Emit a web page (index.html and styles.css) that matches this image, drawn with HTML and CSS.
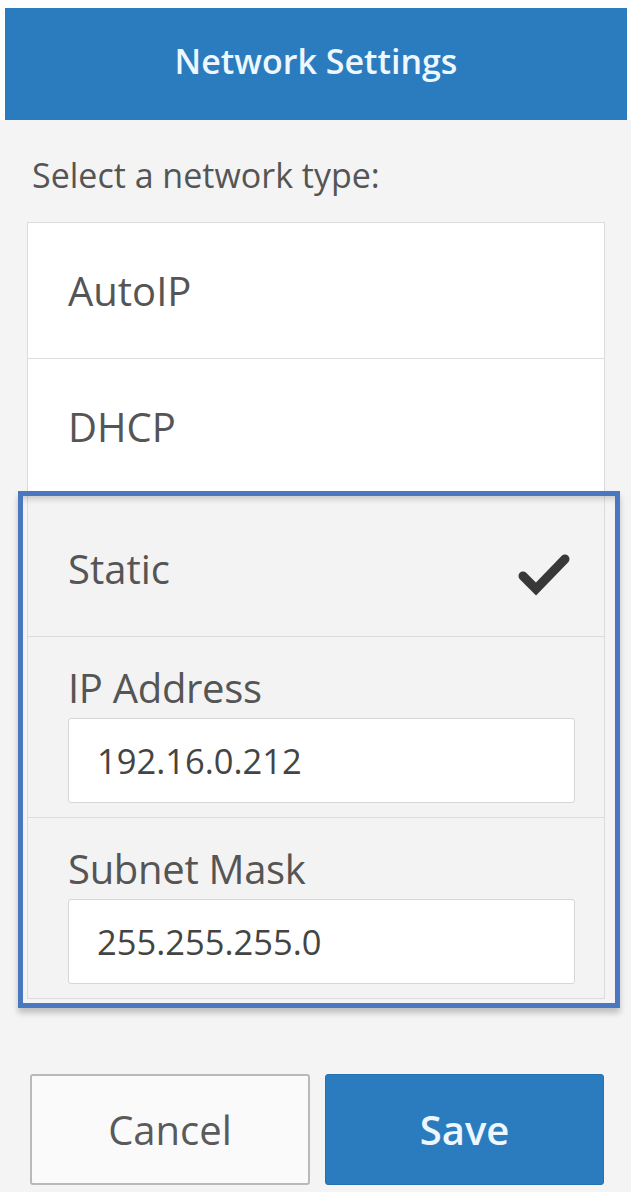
FILE: index.html
```html
<!DOCTYPE html>
<html lang="en">
<head>
<meta charset="utf-8">
<title>Network Settings</title>
<link rel="stylesheet" href="styles.css">
</head>
<body>
<div class="top">
  <header class="title-bar"><h1>Network Settings</h1></header>
</div>
<main class="panel">
  <p class="prompt">Select a network type:</p>
  <div class="options">
    <div class="option">AutoIP</div>
    <div class="option option-dhcp">DHCP</div>
    <div class="option-group">
      <div class="option option-static">
        <span>Static</span>
        <svg class="check" viewBox="0 0 52 44" aria-hidden="true"><path d="M5 24 L18 37 L47 7" /></svg>
      </div>
      <div class="field">
        <label for="ip">IP Address</label>
        <input id="ip" class="text-input" type="text" value="192.16.0.212">
      </div>
      <div class="field field-last">
        <label for="mask">Subnet Mask</label>
        <input id="mask" class="text-input" type="text" value="255.255.255.0">
      </div>
    </div>
  </div>
  <div class="actions">
    <button class="btn btn-cancel" type="button">Cancel</button>
    <button class="btn btn-save" type="button">Save</button>
  </div>
</main>
</body>
</html>
```
FILE: styles.css
```css
* { box-sizing: border-box; }
html, body { margin: 0; padding: 0; }
body {
  width: 631px;
  height: 1192px;
  overflow: hidden;
  background: #f4f4f4;
  font-family: "Open Sans", "Noto Sans", sans-serif;
  color: #555;
}
.top {
  background: #fdfdfd;
  padding: 8px 4px 0 5px;
}
.title-bar {
  height: 112px;
  background: #2b7cbf;
  display: flex;
  align-items: center;
  justify-content: center;
  padding-bottom: 6px;
}
.title-bar h1 {
  margin: 0;
  font-size: 34px;
  font-weight: 600;
  color: #eef7fd;
}
.panel {
  padding: 0 0 8px 0;
}
.prompt {
  margin: 0 0 27px 0;
  padding: 35px 0 0 32px;
  font-size: 34px;
  line-height: 40px;
  color: #555;
}
.options {
  margin: 0 26px 0 27px;
  background: #fff;
  border: 1px solid #dcdcdc;
}
.option {
  height: 136px;
  border-bottom: 1px solid #dcdcdc;
  display: flex;
  align-items: center;
  padding: 0 34px 0 40px;
  font-size: 40px;
  color: #555;
}
.option-dhcp {
  height: 134px;
  border-bottom: none;
}
.option-group {
  position: relative;
  background: #f3f3f3;
}
.option-group::after {
  content: "";
  position: absolute;
  top: -2px;
  left: -10px;
  right: -16px;
  bottom: -10px;
  border: 5px solid #4a78c0;
  box-shadow: 0 5px 6px rgba(0, 0, 0, 0.22), inset 0 7px 6px -4px rgba(0, 0, 0, 0.18);
  pointer-events: none;
}
.option-static {
  height: 144px;
  justify-content: space-between;
  padding-top: 8px;
}
.check {
  width: 52px;
  height: 44px;
  margin-top: 10px;
}
.check path {
  fill: none;
  stroke: #383838;
  stroke-width: 9;
  stroke-linecap: round;
  stroke-linejoin: miter;
}
.field {
  padding: 28px 29px 14px 40px;
  border-bottom: 1px solid #dcdcdc;
}
.field-last {
  border-bottom: none;
}
.field label {
  display: block;
  font-size: 40px;
  line-height: 46px;
  color: #555;
  letter-spacing: -0.3px;
  margin-bottom: 7px;
}
.text-input {
  display: block;
  width: 100%;
  height: 85px;
  margin: 0;
  padding: 0 0 0 28px;
  border: 1px solid #d6d6d6;
  border-radius: 3px;
  background: #fff;
  font-family: inherit;
  font-size: 34.5px;
  color: #444;
  outline: none;
}
.actions {
  display: grid;
  grid-template-columns: 280px 279px;
  gap: 15px;
  margin-top: 75px;
  padding-left: 30px;
}
.btn {
  height: 111px;
  border-radius: 3px;
  font-family: inherit;
  font-size: 40px;
  cursor: pointer;
}
.btn-cancel {
  background: #fafafa;
  border: 2px solid #b9b9b9;
  color: #5a5a5a;
}
.btn-save {
  background: #2a7cbf;
  border: 1px solid #2672b0;
  color: #eef7fd;
  font-weight: 600;
}
```
